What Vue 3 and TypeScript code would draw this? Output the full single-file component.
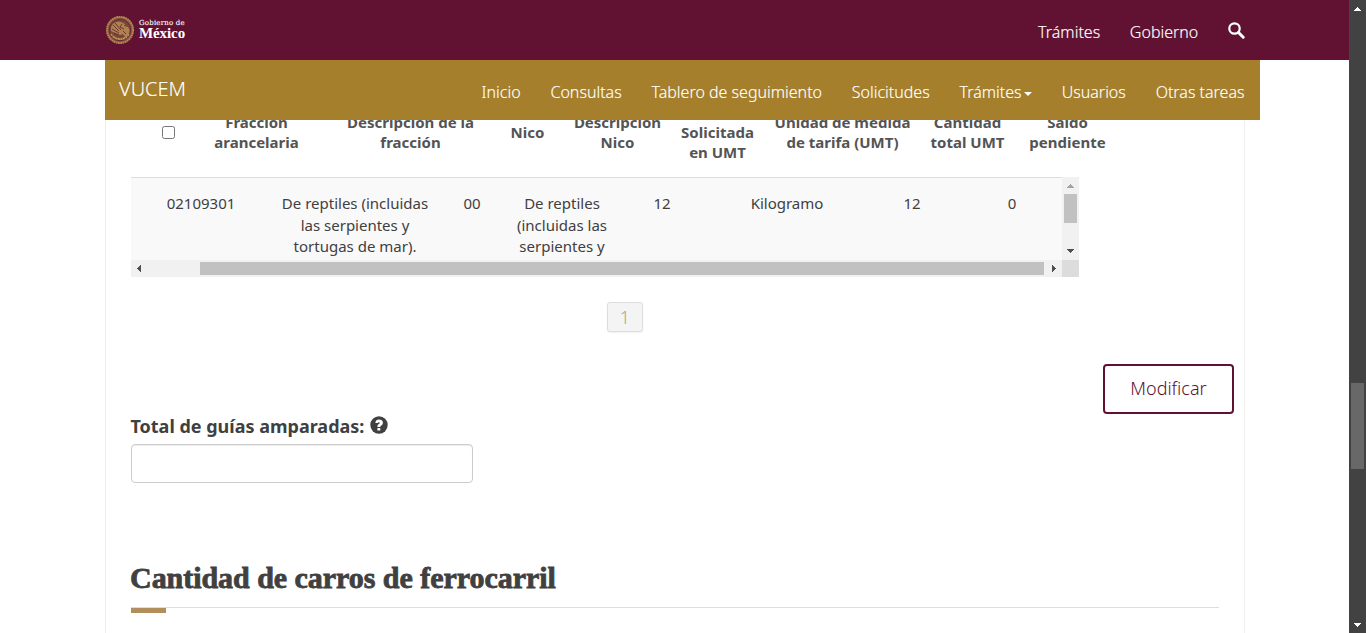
<script setup lang="ts">
import { ref } from 'vue'

interface Column {
  width: number
  head: string[]
  cell: string[]
}

const columns: Column[] = [
  { width: 133, head: ['Fracción', 'arancelaria'], cell: ['02109301'] },
  { width: 175, head: ['Descripción de la', 'fracción'], cell: ['De reptiles (incluidas', 'las serpientes y', 'tortugas de mar).'] },
  { width: 59, head: ['Nico'], cell: ['00'] },
  { width: 121, head: ['Descripción', 'Nico'], cell: ['De reptiles', '(incluidas las', 'serpientes y'] },
  { width: 79, head: ['Cantidad', 'Solicitada', 'en UMT'], cell: ['12'] },
  { width: 171, head: ['Unidad de medida', 'de tarifa (UMT)'], cell: ['Kilogramo'] },
  { width: 79, head: ['Cantidad', 'total UMT'], cell: ['12'] },
  { width: 121, head: ['Saldo', 'pendiente'], cell: ['0'] },
]

const menu = ['Inicio', 'Consultas', 'Tablero de seguimiento', 'Solicitudes', 'Trámites', 'Usuarios', 'Otras tareas']
const total = ref('')
const selected = ref(false)
</script>

<template>
  <div class="window">
    <div class="page">
      <header class="gov">
        <div class="brand">
          <svg class="seal" viewBox="0 0 30 30">
            <circle cx="15" cy="15" r="13.2" fill="#8a5940" />
            <circle cx="15" cy="15" r="13.1" fill="none" stroke="#b08a55" stroke-width="1.900" stroke-dasharray="1.800 .5" />
            <circle cx="15" cy="15" r="10.800" fill="#7c4538" stroke="#64202f" stroke-width=".8" />
            <path d="M6 13c1-5 5-7 10-6l4 2-1 2 4 1c2 2 2 5 0 8l-3 2-2-3-3 1-5-2-4-2z" fill="#ac8250" />
            <path d="M8 10l6 6M10 8l6 7M7 14l7 4M17 9l-2 3 4 2M18 16l3 3M9 18l5 2" fill="none" stroke="#6c2a32" stroke-width=".9" />
            <path d="M6 19c4 6 13 7 18 0M8 22c4 3 10 3 14 0" fill="none" stroke="#bc935b" stroke-width="1.5" stroke-dasharray="2 .7" />
          </svg>
          <div class="wordmark"><span class="small">Gobierno de</span><span class="big">México</span></div>
        </div>
        <nav class="govnav">
          <a>Trámites</a>
          <a>Gobierno</a>
          <svg viewBox="0 0 17 17" width="17" height="17"><circle cx="6.5" cy="6.5" r="5.2" fill="none" stroke="#fff" stroke-width="2.2" /><path d="M10.5 10.5l4.7 4.7" stroke="#fff" stroke-width="3" stroke-linecap="round" /></svg>
        </nav>
      </header>

      <div class="sub">
        <span class="app">VUCEM</span>
        <nav class="menu">
          <a v-for="item in menu" :key="item">{{ item }}<i v-if="item === 'Trámites'" class="caret"></i></a>
        </nav>
      </div>

      <main class="content">
        <div class="thead">
          <div class="check"><input v-model="selected" type="checkbox" /></div>
          <div v-for="(c, i) in columns" :key="i" class="th" :style="{ width: c.width + 'px' }">
            <span v-for="line in c.head" :key="line">{{ line }}</span>
          </div>
        </div>

        <div class="tbody">
          <div class="row">
            <div v-for="(c, i) in columns" :key="i" class="td" :style="{ width: c.width + 'px' }">
              <span v-for="line in c.cell" :key="line">{{ line }}</span>
            </div>
          </div>
          <div class="vbar">
            <svg viewBox="0 0 17 16"><path d="M5 11h7v-1h-1V9h-1V8H9V7H8v1H7v1H6v1H5z" fill="#a3a3a3" /></svg>
            <div class="vthumb"></div>
            <svg class="down" viewBox="0 0 17 16"><path d="M5 5h7v1h-1v1h-1v1H9v1H8V8H7V7H6V6H5z" fill="#505050" /></svg>
          </div>
          <div class="hbar">
            <svg viewBox="0 0 17 17"><path d="M10 5v7H9v-1H8v-1H7V9H6V8h1V7h1V6h1V5z" fill="#505050" /></svg>
            <div class="hthumb"></div>
            <svg viewBox="0 0 17 17"><path d="M7 5v7h1v-1h1v-1h1V9h1V8h-1V7H9V6H8V5z" fill="#505050" /></svg>
          </div>
          <div class="corner"></div>
        </div>

        <div class="pager"><span>1</span></div>
        <div class="actions"><button type="button">Modificar</button></div>

        <label class="field-label" for="total">
          <span>Total de guías amparadas:</span>
          <svg viewBox="0 0 18 18" width="18" height="18"><circle cx="9" cy="9" r="8.7" fill="#404041" /><path d="M5.300 7C5.500 4.600 7 3.500 9 3.500c2.200 0 3.900 1.200 3.900 3.200 0 1.600-.9 2.300-1.900 3-.6.5-.7.600-.7 1.200H7.400c0-1.500.4-2.100 1.400-2.800.7-.5.9-.8.9-1.200 0-.5-.3-.7-.8-.7-.7 0-1 .3-1.100.9zM7.400 12h2.900v2.500H7.400z" fill="#fff" /></svg>
        </label>
        <input id="total" v-model="total" class="field" type="text" />

        <h3>Cantidad de carros de ferrocarril</h3>
        <div class="rule"><div class="accent"></div></div>
      </main>
    </div>

    <div class="scroll">
      <svg viewBox="0 0 17 17"><path d="M5 11h7v-1h-1V9h-1V8H9V7H8v1H7v1H6v1H5z" fill="#fff" /></svg>
      <div class="thumb"></div>
      <svg class="down" viewBox="0 0 17 17"><path d="M5 7h7v1h-1v1h-1v1H9v1H8v-1H7V9H6V8H5z" fill="#fff" /></svg>
    </div>
  </div>
</template>

<style>
html, body { margin: 0; overflow: hidden; }
</style>

<style scoped>
.window { display: flex; width: 1366px; height: 633px; overflow: hidden; background: #fff; font-family: "Noto Sans", sans-serif; color: #404041; }
.window * { box-sizing: border-box; }
svg { display: block; flex: none; }
.page { width: 1349px; height: 633px; overflow: hidden; }
.gov { height: 60px; background: #611232; display: flex; justify-content: space-between; padding: 0 104px 0 105px; }
.brand { display: flex; height: 59px; align-items: center; gap: 4px; }
.seal { width: 30px; height: 30px; }
.wordmark { display: flex; flex-direction: column; color: #fff; font-family: "DejaVu Serif", serif; white-space: nowrap; }
.small { font-size: 7px; line-height: 7px; letter-spacing: .2px; -webkit-text-stroke: .1px #fff; }
.big { font-family: "Liberation Serif", serif; font-size: 15px; font-weight: 700; line-height: 12px; letter-spacing: -.1px; }
.govnav { display: flex; align-items: center; padding-top: 4px; color: #fff; font-size: 16px; font-weight: 300; -webkit-text-stroke: .15px #fff; }
.govnav a { margin-right: 29.7px; }
.govnav svg { margin-top: -3px; }
.sub { width: 1155px; height: 60px; margin-left: 105px; background: #a57f2c; color: #fff; display: flex; justify-content: space-between; padding: 0 15.5px 0 14px; }
.app { font-size: 20px; font-weight: 300; line-height: 58px; -webkit-text-stroke: .1px #fff; }
.menu { display: flex; gap: 29.8px; padding-top: 2px; font-size: 16px; font-weight: 300; line-height: 60px; white-space: nowrap; -webkit-text-stroke: .15px #fff; }
.menu a { display: flex; align-items: center; height: 60px; }
.caret { border: 4px solid transparent; border-top-color: #fff; border-bottom: 0; margin: 3px 0 0 2.3px; }
.content { width: 1140px; height: 513px; margin-left: 105px; padding: 0 10px 0 25px; border: solid #eee; border-width: 0 1px; overflow: hidden; }
.thead { display: flex; align-items: center; height: 88px; margin-top: -31px; padding-bottom: 2px; font-size: 15px; line-height: 20px; font-weight: 700; color: #545454; }
.check { width: 59px; padding-left: 31px; display: flex; flex: none; }
.check input { margin: 0; width: 13px; height: 13px; }
.th { display: flex; flex-direction: column; align-items: center; white-space: nowrap; flex: none; }
.tbody { width: 948px; height: 100px; display: grid; grid-template: 83px 17px / 931px 17px; }
.row { border-top: 1px solid #ddd; background: #f9f9f9; padding: 15.2px 0 0 3.5px; display: flex; overflow: hidden; font-size: 15px; line-height: 21.43px; }
.td { display: flex; flex-direction: column; align-items: center; flex: none; white-space: nowrap; }
.vbar { background: #f1f1f1; display: flex; flex-direction: column; }
.vbar svg { width: 17px; height: 16px; }
.vthumb { width: 13px; height: 29px; margin: 1px 0 0 2px; background: #c1c1c1; }
.down { margin-top: auto; }
.hbar { background: #f1f1f1; display: flex; justify-content: space-between; align-items: center; }
.hbar svg { width: 17px; height: 17px; }
.hthumb { width: 844px; height: 13px; margin: 0 1px 0 auto; background: #c1c1c1; }
.corner { background: #dcdcdc; }
.pager { display: flex; margin: 25px 0 0 476px; }
.pager span { width: 36px; height: 30px; border: 1px solid #ddd; border-radius: 3px; background: #f4f4f4; color: #b5a66f; font-size: 18px; font-weight: 300; line-height: 29px; text-align: center; box-shadow: 0 1px 2px rgba(0,0,0,.06); }
.actions { display: flex; justify-content: flex-end; margin-top: 32px; }
button { width: 131px; height: 50px; border: 2px solid #611232; border-radius: 4px; background: #fff; color: #611232; font: 300 18px/44px "Noto Sans", sans-serif; padding: 0 0 2px; }
.field-label { display: flex; align-items: center; gap: 5.5px; height: 24px; margin-left: -.6px; font-size: 18px; font-weight: 700; white-space: nowrap; }
.field-label svg { margin-top: -2px; }
.field { display: block; width: 342px; height: 39px; margin-top: 6px; padding: 0 12px; border: 1px solid #ccc; border-radius: 4px; box-shadow: inset 0 1px 1px rgba(0,0,0,.075); font: 18px "Noto Sans", sans-serif; }
h3 { margin: 77px 0 0 -1px; height: 47px; font-family: "Liberation Serif", serif; font-size: 30px; font-weight: 700; line-height: 36px; letter-spacing: -.04px; -webkit-text-stroke: .8px #404041; white-space: nowrap; }
.rule { width: 1088px; border-top: 1px solid #ddd; }
.accent { width: 35px; height: 5px; background: #b38e5d; }
.scroll { width: 17px; height: 633px; background: #424242; display: flex; flex-direction: column; }
.scroll svg { width: 17px; height: 17px; }
.thumb { width: 13px; height: 86px; margin: 366px 0 0 2px; background: #686868; }
</style>
